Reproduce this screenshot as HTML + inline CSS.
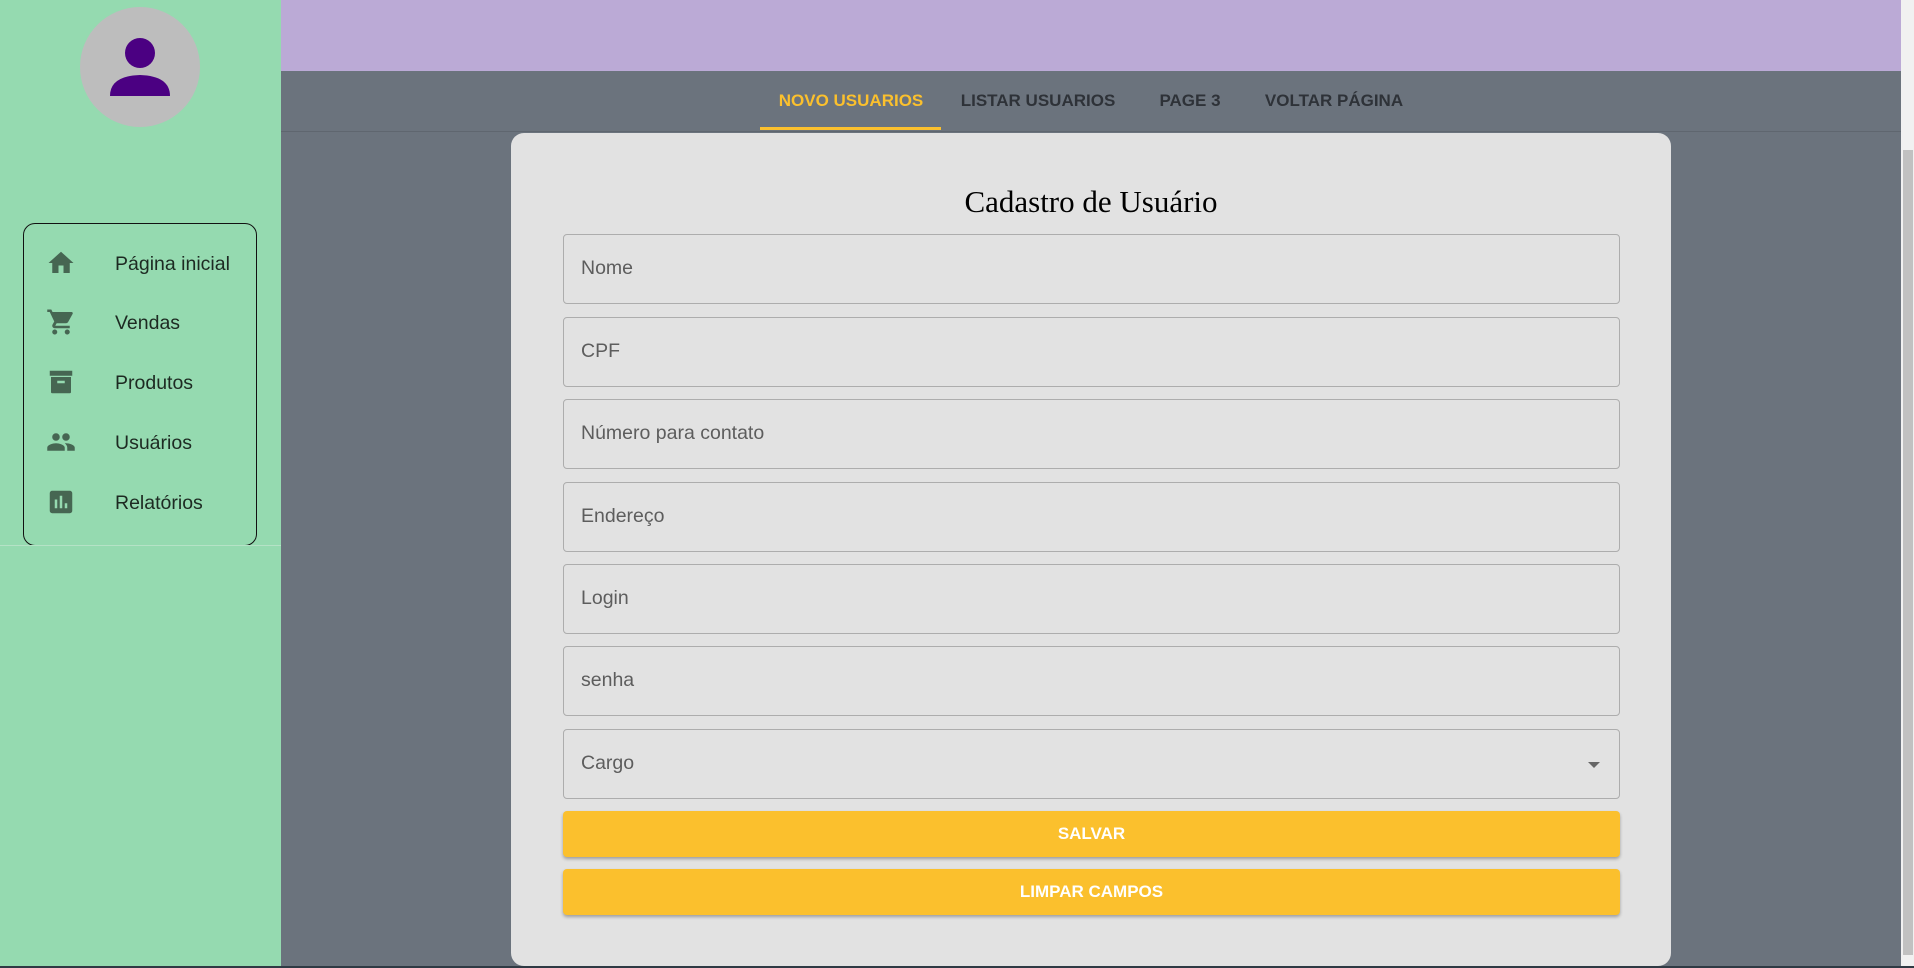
<!DOCTYPE html>
<html><head><meta charset="utf-8">
<style>
*{box-sizing:border-box;margin:0;padding:0}
body{width:1914px;height:968px;overflow:hidden;background:#6b737d;font-family:"Liberation Sans",sans-serif;position:relative}
.side{position:absolute;left:0;top:0;width:281px;height:968px;background:#95dab0}
.avatar{position:absolute;left:80px;top:7px;width:120px;height:120px;border-radius:50%;background:#bdbdbd}
.nav{position:absolute;left:23px;top:223px;width:234px;height:323px;border:1.3px solid #111;border-radius:12px}
.item{position:absolute;left:0;height:40px;width:100%}
.item svg{position:absolute;left:22px;top:3px}
.item span{position:absolute;left:91px;top:8px;font-size:19.5px;color:#1d2a22}
.sline{position:absolute;left:0;top:545px;width:281px;height:1px;background:#b5e2c6}
.hdr{position:absolute;left:281px;top:0;width:1620px;height:71px;background:#bbaad6}
.tabs{position:absolute;left:281px;top:71px;width:1620px;height:61px;border-bottom:1px solid #5f666f}
.tab{position:absolute;top:20px;font-size:17px;color:#2e3238;font-weight:bold;transform:translateX(-50%);white-space:nowrap;letter-spacing:0px}
.ul{position:absolute;left:760px;top:127px;width:181px;height:3px;background:#fbc02d}
.scroll{position:absolute;left:1901px;top:0;width:13px;height:968px;background:#f1f1f1}
.thumb{position:absolute;left:1903px;top:150px;width:10px;height:805px;background:#c1c1c1}
.card{position:absolute;left:511px;top:133px;width:1160px;height:833px;background:#e2e2e2;border-radius:13px}
h1{position:absolute;left:0;width:100%;top:184px;text-align:center;font-family:"Liberation Serif",serif;font-weight:normal;font-size:31px;color:#000}
.f{position:absolute;left:563px;width:1057px;height:70px;border:1px solid #adadad;border-radius:4px}
.f span{position:absolute;left:17px;top:22px;font-size:19.5px;color:#5d5d5d}
.btn{position:absolute;left:563px;width:1057px;height:46px;background:#fbc02d;border-radius:4px;box-shadow:0 2px 3px rgba(0,0,0,.3);color:#fff;font-weight:bold;font-size:17px;text-align:center;line-height:46px}
.bot{position:absolute;left:0;top:966px;width:1914px;height:2px;background:#2f3a44}
</style></head><body>
<div class="side">
 <div class="avatar"><svg width="120" height="120" viewBox="0 0 120 120"><circle cx="60" cy="46" r="15" fill="#4b0082"/><path d="M30 89 Q30 69 60 68 Q90 69 90 89 Z" fill="#4b0082"/></svg></div>
 <div class="nav">
  <div class="item" style="top:21px"><svg width="30" height="30" viewBox="0 0 24 24"><path d="M10 20v-6h4v6h5v-8h3L12 3 2 12h3v8z" fill="#466652"/></svg><span>Página inicial</span></div>
  <div class="item" style="top:80px"><svg width="30" height="30" viewBox="0 0 24 24"><path d="M7 18c-1.1 0-2 .9-2 2s.9 2 2 2 2-.9 2-2-.9-2-2-2zM1 2v2h2l3.6 7.6-1.35 2.4C4.5 15.4 5.5 17 7 17h12v-2H7.4l1.1-2h7.45c.75 0 1.4-.4 1.75-1l3.6-6.5A1 1 0 0 0 20.4 4H5.2l-.95-2H1zm16 16c-1.1 0-2 .9-2 2s.9 2 2 2 2-.9 2-2-.9-2-2-2z" fill="#466652"/></svg><span>Vendas</span></div>
  <div class="item" style="top:140px"><svg width="30" height="30" viewBox="0 0 24 24"><path d="M3 3h18v4H3zM4 8h16v12a1 1 0 0 1-1 1H5a1 1 0 0 1-1-1zm5 3v2h6v-2z" fill="#466652"/></svg><span>Produtos</span></div>
  <div class="item" style="top:200px"><svg width="30" height="30" viewBox="0 0 24 24"><path d="M16 11c1.66 0 2.99-1.34 2.99-3S17.66 5 16 5s-3 1.34-3 3 1.34 3 3 3zm-8 0c1.66 0 2.99-1.34 2.99-3S9.66 5 8 5 5 6.34 5 8s1.34 3 3 3zm0 2c-2.33 0-7 1.17-7 3.5V19h14v-2.5c0-2.330-4.67-3.5-7-3.5zm8 0c-.29 0-.62.02-.97.05 1.16.84 1.97 1.97 1.97 3.45V19h6v-2.5c0-2.33-4.67-3.5-7-3.5z" fill="#466652"/></svg><span>Usuários</span></div>
  <div class="item" style="top:260px"><svg width="30" height="30" viewBox="0 0 24 24"><path d="M19 3H5a2 2 0 0 0-2 2v14a2 2 0 0 0 2 2h14a2 2 0 0 0 2-2V5a2 2 0 0 0-2-2zM9 17H7v-7h2zm4 0h-2V7h2zm4 0h-2v-4h2z" fill="#466652"/></svg><span>Relatórios</span></div>
 </div>
 <div class="sline"></div>
</div>
<div class="hdr"></div>
<div class="tabs">
 <div class="tab" style="left:570px;color:#fbc02d">NOVO USUARIOS</div>
 <div class="tab" style="left:757px">LISTAR USUARIOS</div>
 <div class="tab" style="left:909px">PAGE 3</div>
 <div class="tab" style="left:1053px">VOLTAR PÁGINA</div>
</div>
<div class="ul"></div>
<div class="card"></div>
<h1 style="left:511px;width:1160px">Cadastro de Usuário</h1>
<div class="f" style="top:234px"><span>Nome</span></div>
<div class="f" style="top:317px"><span>CPF</span></div>
<div class="f" style="top:399px"><span>Número para contato</span></div>
<div class="f" style="top:482px"><span>Endereço</span></div>
<div class="f" style="top:564px"><span>Login</span></div>
<div class="f" style="top:646px"><span>senha</span></div>
<div class="f" style="top:729px"><span>Cargo</span><svg style="position:absolute;right:18px;top:31px" width="14" height="8" viewBox="0 0 14 8"><path d="M1 1h12L7 7z" fill="#666"/></svg></div>
<div class="btn" style="top:811px">SALVAR</div>
<div class="btn" style="top:869px">LIMPAR CAMPOS</div>
<div class="scroll"></div><div class="thumb"></div>
<div class="bot"></div>
</body></html>
